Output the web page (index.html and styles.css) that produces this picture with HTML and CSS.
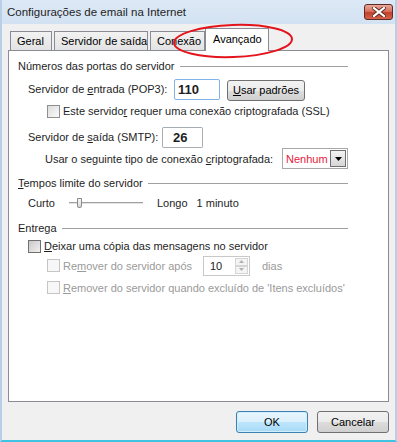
FILE: index.html
```html
<!DOCTYPE html>
<html lang="pt">
<head>
  <meta charset="UTF-8" />
  <title>Configurações de email na Internet</title>
  <link rel="stylesheet" href="styles.css">
</head>
<body>
  <div class="window">
    <div class="titlebar">
      <span class="title">Configurações de email na Internet</span>
      <div class="close-btn">
        <svg width="14" height="10" viewBox="0 0 14 10"><path d="M2 1 L12 9 M12 1 L2 9" stroke="#5a2a22" stroke-width="4" stroke-linecap="square"/><path d="M2 1 L12 9 M12 1 L2 9" stroke="#fff" stroke-width="2.2" stroke-linecap="square"/></svg>
      </div>
    </div>
    <div class="client">
      <div class="tabs">
        <div class="tab tab-first">Geral</div>
        <div class="tab tab-out">Servidor de saída</div>
        <div class="tab tab-conn">Conexão</div>
        <div class="tab selected">Avançado</div>
      </div>
      <div class="panel">
        <div class="group-label">Números das portas do servidor<span class="rule"></span></div>
        <div class="row row-port">
          <span class="lbl lbl-pop">Servidor de <u>e</u>ntrada (POP3):</span>
          <div class="textbox tb-pop">110</div>
          <div class="button btn-default"><span><u>U</u>sar padrões</span></div>
        </div>
        <div class="row row-check indent2">
          <span class="check"></span>
          <span>Este servido<u>r</u> requer uma conexão criptografada (SSL)</span>
        </div>
        <div class="row row-port row-smtp">
          <span class="lbl lbl-smtp">Servidor de <u>s</u>aída (SMTP):</span>
          <div class="textbox tb-smtp">26</div>
        </div>
        <div class="row row-crypt">
          <span>Usar o seguinte tipo de conexão <u>c</u>riptografada:</span>
          <div class="combo">
            <span class="combo-text">Nenhum</span>
            <span class="combo-arrow"><svg width="7" height="4" viewBox="0 0 7 4"><path d="M0 0 H7 L3.5 4 Z" fill="#000"/></svg></span>
          </div>
        </div>

        <div class="group-label gap-group"><span><u>T</u>empos limite do servidor</span><span class="rule"></span></div>
        <div class="row row-slider">
          <span class="slider-lbl">Curto</span>
          <div class="slider">
            <span class="track"></span>
            <span class="thumb"></span>
          </div>
          <span class="slider-long">Longo</span>
          <span class="slider-val">1 minuto</span>
        </div>

        <div class="group-label gap-group gap-last">Entrega<span class="rule"></span></div>
        <div class="row row-keep">
          <span class="check check-keep"></span>
          <span><u>D</u>eixar uma cópia das mensagens no servidor</span>
        </div>
        <div class="row row-remove indent2 disabled">
          <span class="check check-off"></span>
          <span class="remove-lbl">Re<u>m</u>over do servidor após</span>
          <div class="spinner">
            <span class="spin-text">10</span>
            <span class="spin-btns">
              <span class="spin-btn"><svg width="5" height="3" viewBox="0 0 5 3"><path d="M0 3 L2.5 0 L5 3 Z" fill="#b0b0b0"/></svg></span>
              <span class="spin-btn"><svg width="5" height="3" viewBox="0 0 5 3"><path d="M0 0 H5 L2.5 3 Z" fill="#b0b0b0"/></svg></span>
            </span>
          </div>
          <span class="days">dias</span>
        </div>
        <div class="row row-remove row-remove2 indent2 disabled">
          <span class="check check-off"></span>
          <span><u>R</u>emover do servidor quando excluído de 'Itens excluídos'</span>
        </div>
      </div>
      <div class="footer">
        <div class="button dlg-btn ok">OK</div>
        <div class="button dlg-btn">Cancelar</div>
      </div>
    </div>
    <svg class="highlight" width="126" height="38" viewBox="0 0 126 38">
      <ellipse cx="63" cy="19" rx="59" ry="16" fill="none" stroke="#e3141c" stroke-width="2" transform="rotate(-2 63 19)"/>
    </svg>
  </div>
</body>
</html>
```

FILE: styles.css
```css
body {
  margin: 0;
  font-family: "Liberation Sans", Arial, sans-serif;
  font-size: 11px;
  color: #000;
}
u {
  text-decoration: underline;
  text-underline-offset: 1px;
}
.window {
  position: relative;
  width: 397px;
  height: 442px;
  box-sizing: border-box;
  background: #c9dbef;
  border-left: 2px solid #b9cfe8;
  border-right: 2px solid #b9cfe8;
  border-bottom: 2px solid #3ec3e2;
  display: flex;
  flex-direction: column;
}
.titlebar {
  height: 24px;
  display: flex;
  align-items: center;
  background: linear-gradient(#dce8f5, #d3e2f2);
  padding-left: 5px;
}
.title {
  flex: 1;
  font-size: 11.5px;
  color: #1e1e1e;
}
.close-btn {
  width: 29px;
  height: 16px;
  margin-right: 2px;
  border: 1px solid #5e2a25;
  border-radius: 3px;
  background: linear-gradient(#e9a99a 0%, #d8725f 45%, #c2402a 55%, #d4644a 100%);
  display: flex;
  align-items: center;
  justify-content: center;
  box-sizing: border-box;
}
.client {
  flex: 1;
  background: #f0f0f0;
  padding: 5px 6px 0 6px;
  display: flex;
  flex-direction: column;
}
.tabs {
  display: flex;
  align-items: flex-end;
  height: 21px;
  padding-left: 2px;
  position: relative;
  z-index: 1;
}
.tab {
  height: 19px;
  box-sizing: border-box;
  border: 1px solid #898c95;
  border-bottom: none;
  background: linear-gradient(#f2f2f2, #e3e3e3);
  padding: 0 6px;
  margin-right: 2px;
  display: flex;
  align-items: center;
  white-space: nowrap;
}
.tab-first {
  width: 42px;
}
.tab-out {
  width: 94px;
}
.tab-conn {
  width: 55px;
}
.tab.selected {
  height: 23px;
  width: 64px;
  background: #fff;
  margin-right: 0;
  margin-left: -2px;
  margin-bottom: -1px;
  padding: 4px 0 0 7px;
  align-items: flex-start;
}
.panel {
  height: 352px;
  box-sizing: border-box;
  background: #fff;
  border: 1px solid #898c95;
  padding: 6px 0 0 9px;
  display: flex;
  flex-direction: column;
  width: 381px;
}
.group-label {
  width: 330px;
  height: 18px;
  display: flex;
  align-items: center;
  white-space: nowrap;
  color: #1e1e1e;
}
.rule {
  flex: 1;
  height: 1px;
  background: #a0a0a0;
  margin-left: 5px;
  margin-top: 1px;
}
.gap-group {
  margin-top: 5px;
}
.gap-last {
  margin-top: 6px;
}
.row {
  display: flex;
  align-items: center;
  width: 330px;
  white-space: nowrap;
  color: #1e1e1e;
}
.row-port {
  height: 22px;
  margin-top: 3px;
  padding-left: 10px;
  box-sizing: border-box;
}
.row-smtp {
  margin-top: 5px;
}
.lbl-pop {
  width: 146px;
}
.lbl-smtp {
  width: 134px;
}
.textbox {
  height: 21px;
  box-sizing: border-box;
  border: 1px solid #abadb3;
  border-top-color: #a5acb5;
  border-radius: 2px;
  background: #fff;
  font-weight: bold;
  font-size: 13px;
  display: flex;
  align-items: center;
}
.tb-pop {
  width: 46px;
  padding-left: 3px;
  border-color: #7eb4ea;
}
.tb-smtp {
  width: 41px;
  padding-left: 10px;
  margin-top: 1px;
}
.button {
  box-sizing: border-box;
  border: 1px solid #707070;
  border-radius: 3px;
  background: linear-gradient(#f2f2f2 0%, #ebebeb 50%, #dddddd 51%, #cfcfcf 100%);
  display: flex;
  align-items: center;
  justify-content: center;
  color: #000;
}
.btn-default {
  width: 78px;
  height: 21px;
  margin-left: 7px;
  margin-top: 2px;
}
.row-check {
  height: 20px;
  margin-top: 1px;
}
.indent2 {
  padding-left: 29px;
  box-sizing: border-box;
}
.check {
  width: 13px;
  height: 13px;
  box-sizing: border-box;
  border: 1px solid #8e8f8f;
  background: linear-gradient(135deg, #dcdcdc, #fbfbfb);
  margin-right: 3px;
  flex: none;
}
.check-keep {
  background: linear-gradient(135deg, #c9c9c9, #f0f0f0);
  border-color: #707070;
}
.check-off {
  border-color: #c5c5c5;
  background: #f7f7f7;
}
.row-crypt {
  height: 21px;
  padding-left: 27px;
  box-sizing: border-box;
}
.combo {
  margin-left: auto;
  width: 66px;
  height: 21px;
  box-sizing: border-box;
  border: 1px solid #a8a8a8;
  background: #fff;
  display: flex;
  align-items: center;
  padding: 1px;
}
.combo-text {
  flex: 1;
  color: #e8203a;
  padding-left: 2px;
}
.combo-arrow {
  width: 16px;
  height: 17px;
  box-sizing: border-box;
  border: 1px solid #707070;
  background: linear-gradient(#f3f3f3, #d6d6d6);
  display: flex;
  align-items: center;
  justify-content: center;
}
.row-slider {
  height: 20px;
  margin-top: 1px;
  padding-left: 10px;
  box-sizing: border-box;
}
.slider-lbl {
  width: 41px;
}
.slider {
  position: relative;
  width: 74px;
  height: 14px;
  display: flex;
  align-items: center;
}
.track {
  width: 100%;
  height: 2px;
  box-sizing: border-box;
  border-top: 1px solid #a0a0a0;
  border-bottom: 1px solid #e3e3e3;
  background: #d4d4d4;
}
.thumb {
  position: absolute;
  left: 8px;
  top: 2px;
  width: 5px;
  height: 10px;
  box-sizing: border-box;
  border: 1px solid #8a8a8a;
  border-radius: 1px 1px 3px 3px;
  background: linear-gradient(#f5f5f5, #dcdcdc);
}
.slider-long {
  margin-left: 14px;
}
.slider-val {
  margin-left: 9px;
}
.row-keep {
  height: 18px;
  padding-left: 10px;
  box-sizing: border-box;
}
.row-remove {
  height: 21px;
  margin-top: 0;
}
.row-remove2 {
  margin-top: 1px;
}
.disabled {
  color: #9a9a9a;
}
.remove-lbl {
  width: 140px;
}
.spinner {
  width: 47px;
  height: 20px;
  box-sizing: border-box;
  border: 1px solid #c9c9c9;
  background: #fff;
  display: flex;
  align-items: center;
  padding: 1px;
}
.spin-text {
  flex: 1;
  color: #222;
  padding-left: 5px;
}
.spin-btns {
  display: flex;
  flex-direction: column;
  width: 13px;
  height: 16px;
}
.spin-btn {
  flex: 1;
  box-sizing: border-box;
  border: 1px solid #d5d5d5;
  background: #f4f4f4;
  display: flex;
  align-items: center;
  justify-content: center;
}
.days {
  margin-left: 12px;
}
.footer {
  display: flex;
  justify-content: flex-end;
  gap: 9px;
  padding-top: 9px;
  padding-right: 1px;
  width: 381px;
}
.dlg-btn {
  width: 72px;
  height: 22px;
}
.ok {
  border-color: #3c7fb1;
  background: linear-gradient(#eaf6fd 0%, #d9f0fc 50%, #bee6fd 51%, #a7d9f5 100%);
  box-shadow: inset 0 0 0 1px #d0eefc;
}
.highlight {
  position: absolute;
  left: 168px;
  top: 22px;
  z-index: 2;
  pointer-events: none;
}
```
